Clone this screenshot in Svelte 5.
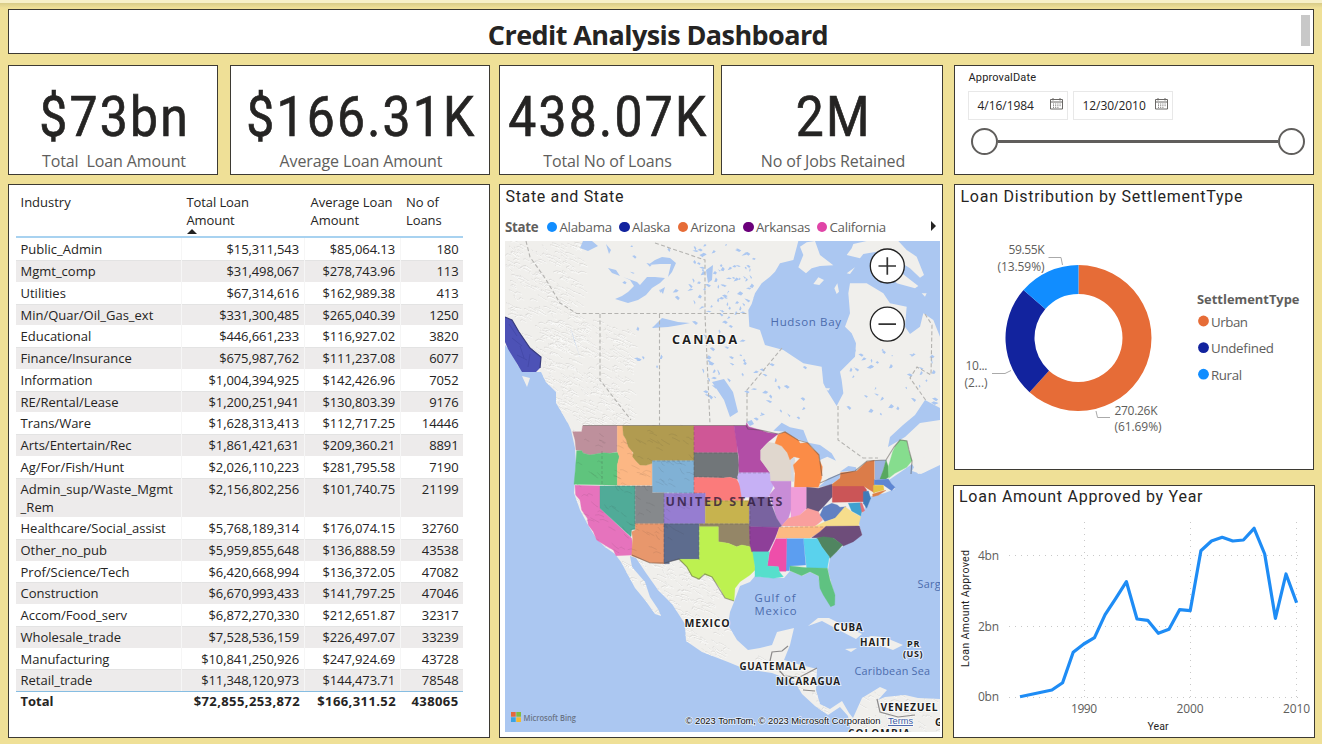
<script>
  const cards = {
    left: [
      { value: '$73bn', label: 'Total  Loan Amount', width: 210 },
      { value: '$166.31K', label: 'Average Loan Amount', width: 260 }
    ],
    middle: [
      { value: '438.07K', label: 'Total No of Loans', width: 215 },
      { value: '2M', label: 'No of Jobs Retained', width: 222 }
    ]
  };

  const rows = [
    ['Public_Admin', '$15,311,543', '$85,064.13', '180'],
    ['Mgmt_comp', '$31,498,067', '$278,743.96', '113'],
    ['Utilities', '$67,314,616', '$162,989.38', '413'],
    ['Min/Quar/Oil_Gas_ext', '$331,300,485', '$265,040.39', '1250'],
    ['Educational', '$446,661,233', '$116,927.02', '3820'],
    ['Finance/Insurance', '$675,987,762', '$111,237.08', '6077'],
    ['Information', '$1,004,394,925', '$142,426.96', '7052'],
    ['RE/Rental/Lease', '$1,200,251,941', '$130,803.39', '9176'],
    ['Trans/Ware', '$1,628,313,413', '$112,717.25', '14446'],
    ['Arts/Entertain/Rec', '$1,861,421,631', '$209,360.21', '8891'],
    ['Ag/For/Fish/Hunt', '$2,026,110,223', '$281,795.58', '7190'],
    ['Admin_sup/Waste_Mgmt\n_Rem', '$2,156,802,256', '$101,740.75', '21199'],
    ['Healthcare/Social_assist', '$5,768,189,314', '$176,074.15', '32760'],
    ['Other_no_pub', '$5,959,855,648', '$136,888.59', '43538'],
    ['Prof/Science/Tech', '$6,420,668,994', '$136,372.05', '47082'],
    ['Construction', '$6,670,993,433', '$141,797.25', '47046'],
    ['Accom/Food_serv', '$6,872,270,330', '$212,651.87', '32317'],
    ['Wholesale_trade', '$7,528,536,159', '$226,497.07', '33239'],
    ['Manufacturing', '$10,841,250,926', '$247,924.69', '43728'],
    ['Retail_trade', '$11,348,120,973', '$144,473.71', '78548']
  ];

  const stateLegend = [
    ['Alabama', '#118dff', 54], ['Alaska', '#12239e', 40], ['Arizona', '#e66c37', 47],
    ['Arkansas', '#6b007b', 55], ['California', '#e044a7', 58]
  ];

  const settlement = [
    ['Urban', '#e66c37', 0.6169], ['Undefined', '#12239e', 0.2472], ['Rural', '#118dff', 0.1359]
  ];

  function slice(from, to) {
    const cx = 1078.5, cy = 338, R = 73, r = 44;
    const p = (t, rad) => `${cx + rad * Math.sin(t * 2 * Math.PI)} ${cy - rad * Math.cos(t * 2 * Math.PI)}`;
    const big = to - from > 0.5 ? 1 : 0;
    return `M${p(from, R)}A${R} ${R} 0 ${big} 1 ${p(to, R)}L${p(to, r)}A${r} ${r} 0 ${big} 0 ${p(from, r)}Z`;
  }
  let acc = 0;
  const slices = settlement.map(([name, color, share]) => {
    const d = slice(acc, acc + share);
    acc += share;
    return { name, color, d };
  });

  // Vertical position of each year from 1984 to 2010.
  const series = [696.7, 694.5, 692.3, 690, 682.7, 652.3, 644, 637.7, 614.7, 598.3, 581.7, 619, 620.3,
    633.3, 629.3, 609.7, 610.7, 550.7, 541, 537.3, 541, 540, 528.3, 554, 618.3, 574, 602.7];
  const line = series.map((y, i) => `${(1020 + i * 10.64).toFixed(1)},${y}`).join(' ');

  // Western half of the country grid.
  const west = [
    ['WA', '#be909c', '38,65 65,65 68,47 172,47 172,125 150,130 130,128 90,135 70,130 65,122 48,120 45,90'],
    ['OR', '#5fc47d', '50,122 65,122 70,130 90,135 130,128 150,130 175,127 178,140 172,165 172,226 42,223 46,180'],
    ['ID', '#fcb784', '172,47 188,47 190,75 198,88 205,110 215,118 218,130 225,145 230,155 240,165 258,166 277,160 277,226 172,226 172,165 178,140 172,125'],
    ['MT', '#b19b50', '188,47 402,47 402,152 277,152 277,160 258,166 240,165 230,155 218,140 220,128 205,110 198,88 190,75'],
    ['WY', '#80b1d5', '277,152 402,152 402,250 277,247'],
    ['ND', '#cf5796', '402,47 522,47 530,90 533,128 402,128'],
    ['SD', '#717679', '402,128 533,128 537,165 533,208 510,202 490,204 402,202'],
    ['NE', '#fb7b7b', '402,202 490,204 510,202 530,208 540,225 552,272 436,272 436,250 402,250'],
    ['CA', '#e673bd', '45,226 120,228 120,295 215,385 218,410 218,435 168,437 160,420 145,412 110,390 100,365 85,345 82,325 65,300 60,270 47,255'],
    ['NV', '#50ab98', '120,228 226,228 226,358 215,360 213,380 120,295'],
    ['UT', '#86898c', '226,228 277,228 277,248 312,248 312,341 226,341'],
    ['CO', '#967dd1', '312,250 436,250 436,341 312,341'],
    ['AZ', '#e8976c', '226,341 312,341 312,461 270,458 215,437 218,385 215,365 226,360'],
    ['NM', '#5d6c8e', '312,341 418,341 418,448 357,448 328,455 328,461 312,461'],
    ['KS', '#c7b34e', '436,272 568,272 568,341 436,341'],
    ['OK', '#948667', '418,341 570,341 572,410 545,405 530,410 505,400 475,395 475,350 418,350'],
    ['TX', '#bdf150', '418,350 475,350 475,395 505,400 530,410 545,405 572,410 582,415 585,480 570,495 540,515 525,535 522,572 495,563 480,535 455,500 430,493 418,508 395,498 380,470 357,448 418,448']
  ];

  const east = [
    ['MN', '#b24da6', '-18,47 18,47 20,38 26,50 60,60 85,68 114,72 85,95 62,120 62,150 90,188 -3,188 -4,140'],
    ['IA', '#c6b0f5', '-3,188 90,188 105,215 95,240 85,262 5,262 0,230 -8,200'],
    ['WI', '#e0d7ce', '62,120 85,97 105,100 125,108 150,130 165,150 158,214 92,214 90,188 62,150'],
    ['MI', '#fb8c47', '105,100 114,74 135,65 155,78 175,90 180,100 203,98 216,115 236,132 238,150 247,170 245,205 235,232 163,232 165,190 160,165 180,145 162,140 150,150 142,128 125,108'],
    ['IL', '#c88dd7', '92,214 153,214 153,300 145,325 125,348 110,325 100,290 88,255 105,235'],
    ['IN', '#f09dd8', '153,232 200,232 200,295 180,315 153,325'],
    ['OH', '#66557c', '200,232 235,235 277,222 277,260 250,290 235,305 200,298'],
    ['MO', '#7963a0', '28,262 85,262 95,285 110,325 125,348 118,352 28,350 28,290'],
    ['AR', '#8e3f99', '28,350 118,352 105,385 88,420 82,428 35,425 30,405'],
    ['KY', '#f99f9d', '125,348 145,325 180,315 203,295 235,305 248,330 225,349'],
    ['TN', '#fcba82', '118,352 258,348 240,365 210,384 108,384'],
    ['WV', '#6180c2', '240,315 250,292 275,280 292,285 300,292 318,290 300,315 285,325 255,335'],
    ['VA', '#f6dd8c', '225,349 255,335 285,325 315,290 335,305 362,320 355,348'],
    ['NC', '#6e4d7a', '258,349 358,348 366,375 340,395 310,408 280,384 215,383 240,365'],
    ['SC', '#508560', '230,385 250,380 280,384 308,405 290,425 270,445 245,410'],
    ['GA', '#5ad2ed', '190,386 232,386 245,410 268,440 262,475 200,475'],
    ['AL', '#5c9ef0', '140,386 190,386 197,465 150,468 148,482 138,482'],
    ['MS', '#ee4eaa', '108,386 140,386 138,484 118,484 115,470 82,468 88,430'],
    ['LA', '#56dfcc', '38,425 88,425 82,468 115,470 118,485 130,500 100,505 60,500 45,500 45,470'],
    ['FL', '#5fc281', '150,468 200,473 262,475 270,510 285,555 284,585 272,590 250,555 240,535 236,498 210,485 185,497 150,482'],
    ['PA', '#cb5557', '277,228 370,226 380,240 372,275 277,277'],
    ['NY', '#db7c49', '277,222 300,205 302,188 350,183 380,155 403,151 403,225 403,248 370,228 277,228'],
    ['NJ', '#3f7bb9', '370,245 385,243 392,265 380,295 370,280'],
    ['MD', '#3fa1d0', '325,280 362,278 367,300 362,318 335,303'],
    ['DE', '#e27077', '360,280 366,278 374,302 366,307'],
    ['VT', '#9cb3df', '405,152 438,150 430,180 422,207 405,207'],
    ['NH', '#58a85f', '438,150 445,170 447,200 438,207 420,207 430,180'],
    ['MA', '#5e86d2', '403,209 445,207 455,222 465,232 455,242 430,225 403,224'],
    ['CT', '#e5c345', '400,226 430,226 432,240 400,248'],
    ['LI', '#dd8147', '398,252 425,244 438,241 415,256 398,260'],
    ['ME', '#86dd8e', '445,170 458,125 466,108 480,90 500,92 505,120 516,152 500,172 465,190 446,205']
  ];

  // Seeded generator keeps terrain strokes and lakes stable between renders.
  let seed = 7;
  const rnd = () => ((seed = (seed * 16807) % 2147483647) / 2147483647);
  function ridges(x0, y0, w, h, n) {
    let d = '';
    for (let i = 0; i < n; i++) {
      const x = x0 + rnd() * w, y = y0 + rnd() * h;
      const a = 2 + rnd() * 5, b = (rnd() - 0.2) * 6;
      d += `M${x.toFixed(1)} ${y.toFixed(1)}q${(a / 2).toFixed(1)} ${(b - 2).toFixed(1)} ${a.toFixed(1)} ${b.toFixed(1)}l2 1`;
    }
    return d;
  }
  const ridgePath =
    ridges(505, 241, 75, 110, 260) + ridges(540, 320, 90, 105, 330) + ridges(570, 425, 120, 130, 130) +
    ridges(615, 555, 110, 100, 260) + ridges(740, 655, 90, 70, 100) + ridges(855, 690, 85, 45, 60) + ridges(890, 241, 50, 70, 60);
  function lakes(x0, y0, w, h, n) {
    let d = '';
    for (let i = 0; i < n; i++) {
      const x = x0 + rnd() * w, y = y0 + rnd() * h;
      const a = 1.5 + rnd() * 5, b = (rnd() - 0.5) * 5, c = 0.7 + rnd() * 1.6;
      d += `M${x.toFixed(1)} ${y.toFixed(1)}l${(a / 2).toFixed(1)} ${(b - c).toFixed(1)}l${(a / 2).toFixed(1)} ${c.toFixed(1)}l${(-a / 3).toFixed(1)} ${c.toFixed(1)}z`;
    }
    return d;
  }
  const lakePath =
    lakes(690, 243, 70, 80, 75) + lakes(700, 320, 45, 80, 32) + lakes(745, 360, 60, 60, 20) +
    lakes(845, 350, 90, 65, 42) + lakes(630, 320, 60, 50, 8) + lakes(620, 243, 75, 60, 12);

  // x, baseline, width, size, text, kind
  const places = [
    [672, 344, 65, 12.5, 'CANADA', 'land'],
    [665.5, 506, 117, 12.5, 'UNITED STATES', 'us'],
    [684.5, 626.5, 45, 10.5, 'MEXICO', 'land'],
    [833.5, 631, 29, 9.8, 'CUBA', 'land'],
    [860, 645.5, 30, 9.8, 'HAITI', 'land'],
    [907, 647, 12.5, 9, 'PR', 'land'],
    [903, 656.5, 19.5, 9, '(US)', 'land'],
    [739.5, 670, 66, 9.8, 'GUATEMALA', 'land'],
    [776, 684.5, 64, 9.8, 'NICARAGUA', 'land'],
    [880.5, 711, 57, 10.3, 'VENEZUEL', 'land'],
    [935, 726, 8, 10, 'G', 'land'],
    [848, 737, 62, 10, 'COLOMBIA', 'land'],
    [770.5, 325.5, 70.5, 11.5, 'Hudson Bay', 'sea'],
    [754.5, 602, 41, 11.3, 'Gulf of', 'sea'],
    [754.5, 615, 42, 11.3, 'Mexico', 'sea'],
    [917.5, 588, 23, 10.8, 'Sarg', 'sea'],
    [854.5, 675, 75.5, 10.8, 'Caribbean Sea', 'sea']
  ];
</script>

{#snippet card(c)}
  <section class="panel card" style="width:{c.width}px">
    <div class="value">{c.value}</div>
    <div class="caption">{c.label}</div>
  </section>
{/snippet}

{#snippet calendar()}
  <svg class="cal" width="13" height="12" viewBox="0 0 13 12">
    <path d="M.5 1.500h12v9.500H.5zM.5 4h12M3 0v2.500M10 0v2.500" fill="none" stroke="#6a6866" />
    <path d="M3 6h1M5.200 6h1M7.400 6h1M9.600 6h1M3 7.700h1M5.200 7.700h1M7.400 7.700h1M9.600 7.700h1M3 9.400h1M5.200 9.400h1M7.400 9.400h1" stroke="#6a6866" stroke-width=".9" />
  </svg>
{/snippet}

<div class="page">
  <header class="panel head">
    <h1>Credit Analysis Dashboard</h1>
    <span class="thumb"></span>
  </header>

  <main>
    <div class="col left">
      <div class="cards">
        {#each cards.left as c}{@render card(c)}{/each}
      </div>
      <section class="panel tablebox">
        <div class="row thead">
          <div>Industry</div>
          <div>Total Loan<br />Amount<i class="sort"></i></div>
          <div>Average Loan<br />Amount</div>
          <div>No of<br />Loans</div>
        </div>
        {#each rows as r, i}
          <div class="row" class:odd={i % 2} class:tall={r[0].includes('\n')}>
            {#each r as cell}<div>{cell}</div>{/each}
          </div>
        {/each}
        <div class="row total"><div>Total</div><div>$72,855,253,872</div><div>$166,311.52</div><div>438065</div></div>
      </section>
    </div>

    <div class="col middle">
      <div class="cards">
        {#each cards.middle as c}{@render card(c)}{/each}
      </div>
      <section class="panel mapbox">
        <h2>State and State</h2>
        <div class="legend">
          <b>State</b>
          {#each stateLegend as [name, color, w]}
            <span class="key"><i style="background:{color}"></i><span style="width:{w}px">{name}</span></span>
          {/each}
          <i class="next"></i>
        </div>
        <svg class="map" width="435" height="491" viewBox="505 241 435 491">
          <defs>
            <path id="land" d="M505 241H940V408L925 400 915 415 903 425 890 437 888 447 905 437 920 423 940 420V462L925 472 918 474 912 464 905 469 889 480 895 489 885 493 868 497 864 510 858 520 862 535 843 546 830 558 828 570 831 582 835 597 832 606 827 600 821 588 818 576 810 572 802 576 790 571 784 578 773 578 755 576 750 582 740 586 734 602 730 612 728 625 737 640 748 650 760 648 772 645 777 632 794 628 790 645 784 660 801 665 817 669 816 690 820 704 830 709 842 701 849 713 853 718 862 698 880 687 887 690 878 700 885 697 905 695 918 698 940 699V732H851L848 716 840 707 828 715 815 706 802 694 795 682 772 673 745 669 728 662 702 652 686 641 685 624 672 604 658 590 646 573 636 558 630 556 632 567 645 582 650 597 658 609 661 616 655 614 645 600 635 588 628 575 621 562 615 554 605 547 596 538 588 525 580 510 574 493 576 465 575 448 571 430 567 421 556 403 556 392 546 382 541 372 528 372 518 366 512 353 505 345Z" />
            <clipPath id="onland"><use href="#land" /></clipPath>
          </defs>
          <rect x="505" y="241" width="435" height="491" fill="#abc7f1" />
          <use href="#land" fill="#f0efec" />
          <g clip-path="url(#onland)" fill="none">
            <path d={ridgePath} stroke="#d8d7d4" stroke-width=".8" />
            <path d={ridgePath} stroke="#fbfbfa" stroke-width=".8" transform="translate(.8 1)" />
          </g>
          <path d={lakePath} fill="#abc7f1" />
          <g fill="#abc7f1">
            <path d="M583 241L592 241 598 246 588 251 580 248ZM606 244L611 250 609 254ZM608 268L616 270 620 276 612 273ZM615 299L622 296 628 292 634 286 630 280 623 277 637 282 640 285 647 277 655 277 665 278 660 283 652 288 646 295 638 300 628 303ZM648 265L655 260 662 257 670 258 676 263 672 272 668 277 671 264 660 264ZM652 328L657 323 662 318 678 322 690 323 680 325 668 327ZM660 290L665 287 663 294ZM706 270L713 265 712 280 708 283ZM712 382L724 379 733 392 738 412 730 417 724 400ZM570 326L574 340 581 360 576 345Z" />
            <path transform="translate(720 180) scale(.33333)" d="M235 183L220 240 180 250 165 275 150 290 125 310 105 340 95 372 85 390 88 440 120 450 135 495 190 510 250 550 305 560 310 610 320 630 350 678 370 640 365 600 360 575 405 530 408 490 395 460 375 440 390 400 385 340 390 310 440 310 490 340 510 370 560 380 555 440 570 462 600 440 610 400 640 420 660 470 660 183Z" />
            <path transform="translate(740 410) scale(.33333)" d="M100 62L125 38 150 52 190 60 205 98 175 88 155 78 135 65ZM205 98L240 105 275 130 288 152 262 140 240 150 236 132ZM235 232L265 205 302 190 298 206 270 225ZM300 185L325 168 348 172 350 182ZM20 35L35 30 42 42 30 48Z" />
          </g>
          <g fill="#f0efec">
            <path transform="translate(720 180) scale(.33333)" d="M240 200L260 187 285 183 300 225 340 256 300 258 275 265 258 280 235 262 250 225ZM280 312L295 292 312 300 298 315ZM343 325L352 310 357 335 350 342ZM380 225L395 205 400 192 440 183 535 183 560 210 590 230 612 285 600 293 570 265 530 240 500 220 470 215 430 222 420 235ZM500 270L540 275 595 318 585 325 530 310ZM605 340L620 340 615 350ZM310 625L330 625 325 632ZM380 280L405 262 390 282Z" />
            <path d="M561 411L573 417 582 425 577 429 567 422ZM522 376L530 378 527 387ZM545 372L548 378 543 377ZM808 626L818 618 829 618 841 624 862 634 856 639 835 628 822 621ZM861 640L871 636 884 637 903 645 893 650 882 646 867 647ZM845 649L857 648 851 652ZM911 645L920 645 918 648ZM912 471L917 461 940 450 940 465 921 474Z" />
          </g>
          <g fill="none" stroke="#b4b3b0" stroke-width="1.1" stroke-dasharray="4 2.4">
            <path d="M576 313.5H748M600 314V380L631 420M659.5 314V425M526 241L530 257 545 278 560 303 576 313M655 243L705 260V315L710 424M782 348L747 390V424M838 406V440L863 458 878 458M925 314L932 325 931 375 917 367 910 378 927 402" />
          </g>
          <path d="M770 661L772 652 782 651 788 646M779 670L784 676 800 677 817 668M803 690L815 691M877 699L880 712 898 717 915 715" fill="none" stroke="#8d8b8b" stroke-width="1.2" />

          <path d="M505 317L512 320 519 332 530 348 541 357 540 368 536 372 522 372 516 362 508 349 505 342Z" fill="#4d52b6" />
          <path d="M505 317L512 320 519 332 530 348 541 357 540 368" fill="none" stroke="#383c7e" stroke-width="1.2" />
          <path d="M509 324l8 12M512 338l10 8M520 346l4 12M530 354l-2 13M517 355l10 5" stroke="#454aaa" fill="none" />
          <g transform="translate(560 410) scale(.33333)">
            {#each west as [id, fill, pts] (id)}<polygon points={pts} {fill} stroke={fill} stroke-width="1" />{/each}
          </g>
          <g transform="translate(740 410) scale(.33333)">
            {#each east as [id, fill, pts] (id)}<polygon points={pts} {fill} stroke={fill} stroke-width="1" />{/each}
            <path d="M152 148L166 140 158 165 163 215 155 214Z" fill="#d3d9e2" />
          </g>
          <path d="M583 425.5H746L748 429 760 430 778 434M820 483L840 474 855 471 867 461 886 460 894 447 900 440 907 441 909 450 912 461 911 474M632 555L650 563 665 563 679 559 687 567 692 576 699 579 705 574 712 577 720 590 725 598 734 601M778 434L785 432 798 440 808 443 819 455 822 476" fill="none" stroke="#4c4540" stroke-opacity=".45" stroke-width="1.2" />
          <g clip-path="url(#onland)" opacity=".1"><path d={ridges(575, 430, 115, 125, 110)} stroke="#333" stroke-width=".9" fill="none" /></g>
          <path d="M602 451V486M617 486H652M635 486V524M652 461H694M664 494V563M664 493H705M694 427V494M694 453H738M694 477H723M705 501H750M635 524H750M699 527V560M738 473H770M780 527H825M750 501V547" stroke="#3a3340" stroke-opacity=".25" fill="none" stroke-width=".8" stroke-dasharray="3 2" />

          {#each places as [x, y, w, size, text, kind]}
            <text {x} {y} font-size={size} textLength={w} class={kind}>{text}</text>
          {/each}

          <g stroke="#222" fill="#fff">
            <circle cx="887.3" cy="266" r="17" stroke-width="1.3" />
            <circle cx="887.3" cy="324.2" r="17" stroke-width="1.3" />
            <path d="M878.5 266H896M887.3 257.3V274.8M878.5 324.2H896" stroke="#333" stroke-width="1.7" />
          </g>

          <rect x="511" y="712" width="4.7" height="4.7" fill="#e5673c" />
          <rect x="516.3" y="712" width="4.7" height="4.7" fill="#83bb3f" />
          <rect x="511" y="717.3" width="4.7" height="4.7" fill="#3aa3e3" />
          <rect x="516.3" y="717.3" width="4.7" height="4.7" fill="#f5ba2e" />
          <text x="523.5" y="720.5" font-size="9" textLength="52.5" lengthAdjust="spacingAndGlyphs" class="bing">Microsoft Bing</text>
          <text x="685.5" y="724" font-size="9" textLength="195" lengthAdjust="spacingAndGlyphs" class="copy">© 2023 TomTom, © 2023 Microsoft Corporation</text>
          <text x="888" y="724" font-size="9" textLength="25" lengthAdjust="spacingAndGlyphs" class="terms">Terms</text>
        </svg>
      </section>
    </div>

    <div class="col right">
      <section class="panel datebox">
        <div class="dlabel">ApprovalDate</div>
        <div class="inputs">
          <div class="date"><span>4/16/1984</span>{@render calendar()}</div>
          <div class="date"><span>12/30/2010</span>{@render calendar()}</div>
        </div>
        <div class="slider"><i></i><b></b><i></i></div>
      </section>

      <section class="panel donutbox">
        <svg width="358" height="284" viewBox="955 185 358 284">
          <text x="960.500" y="202" font-size="16" textLength="282" class="din title">Loan Distribution by SettlementType</text>
          {#each slices as s}<path d={s.d} fill={s.color} />{/each}
          <path d="M1048.500 257.500H1061L1062.500 265M992 373.500H1005L1011 370.500M1096 411L1097.500 417.500H1110" fill="none" stroke="#aaa" />
          <g class="ui" font-size="12">
            <text x="1008.500" y="254" textLength="36">59.55K</text>
            <text x="997.500" y="271" textLength="47">(13.59%)</text>
            <text x="965.500" y="370" textLength="22">10...</text>
            <text x="964.500" y="387" textLength="23">(2...)</text>
            <text x="1114.500" y="415" textLength="43">270.26K</text>
            <text x="1114.500" y="431" textLength="47">(61.69%)</text>
            <text x="1197" y="304" font-size="13" font-weight="700" textLength="102.500" lengthAdjust="spacingAndGlyphs">SettlementType</text>
          </g>
          <circle cx="1203.500" cy="321" r="5.400" fill="#e66c37" />
          <circle cx="1203.500" cy="347.600" r="5.400" fill="#12239e" />
          <circle cx="1203.500" cy="374.200" r="5.400" fill="#118dff" />
          <g class="ui" font-size="13.300">
            <text x="1211" y="327" textLength="37">Urban</text>
            <text x="1211" y="353" textLength="63">Undefined</text>
            <text x="1211" y="380" textLength="31">Rural</text>
          </g>
        </svg>
      </section>

      <section class="panel linebox">
        <svg width="360" height="251" viewBox="954 486 360 251">
          <text x="959" y="502" font-size="16" textLength="243.500" class="din title">Loan Amount Approved by Year</text>
          <path d="M1009 555.500H1302M1009 626.500H1302M1009 697.500H1302M1084.500 522V697M1190.500 522V697M1296.500 522V697" fill="none" stroke="#c8c8c8" stroke-dasharray="1 5" />
          <polyline points={line} fill="none" stroke="#1e8cf5" stroke-width="3.200" stroke-linejoin="round" />
          <g class="ui" font-size="12">
            <text x="978" y="560" textLength="21">4bn</text>
            <text x="978" y="631" textLength="21">2bn</text>
            <text x="978" y="701" textLength="21">0bn</text>
            <text x="1071" y="713" textLength="26">1990</text>
            <text x="1176.500" y="713" textLength="27">2000</text>
            <text x="1283" y="713" textLength="27">2010</text>
          </g>
          <text x="1147.500" y="730" font-size="10.500" textLength="21" class="din">Year</text>
          <text transform="translate(968.500 667) rotate(-90)" font-size="10.500" textLength="117" class="din">Loan Amount Approved</text>
        </svg>
      </section>
    </div>
  </main>
</div>

<style>
  :global(body) { background: #efe097; }
  * { box-sizing: border-box; }
  .page {
    width: 1322px; height: 744px; padding: 9px 8px 0; overflow: hidden;
    background: linear-gradient(#f7f0c8 0 3px, #d8cb88 3px, #efe097 8px);
    font-family: "Open Sans", "Noto Sans", sans-serif; color: #252423;
  }
  .panel { background: #fff; border: 1px solid #3d3a33; }
  .head { height: 45px; width: 1306px; display: flex; justify-content: center; position: relative; }
  h1 { margin: 5px 6px 0 0; font-size: 27px; line-height: 40px; font-weight: 700; letter-spacing: -.58px; white-space: nowrap; }
  .thumb { position: absolute; right: 3px; top: 5px; width: 9px; height: 31px; background: #c8c8c8; }
  main { display: flex; margin-top: 11px; }
  .col { display: flex; flex-direction: column; flex-shrink: 0; }
  .left { width: 482px; margin-right: 9px; }
  .middle { width: 444px; margin-right: 11px; }
  .right { width: 362px; }
  .cards { display: flex; justify-content: space-between; height: 110px; margin-bottom: 9px; }
  .card { text-align: center; display: flex; flex-direction: column; align-items: center; }
  .value { font: 400 56px/60px Roboto, sans-serif; letter-spacing: 2.500px; margin: 21px 0 0 3px; transform: scaleX(.89); white-space: nowrap; -webkit-text-stroke: .7px #252423; }
  .caption { font-size: 16px; line-height: 24px; letter-spacing: -.12px; color: #605e5c; white-space: pre; margin-top: 2px; padding-left: 2px; }

  .tablebox { height: 554px; padding: 0 0 0 6.500px; font-size: 13px; letter-spacing: -.1px; }
  .row { display: grid; grid-template-columns: 166px 123.500px 96px 62px; width: 447.500px; height: 21.780px; line-height: 18px; white-space: pre; }
  .row > div { padding: 2px 5px 0 5px; border-right: 1px solid #f6f6f6; }
  .row > div:first-child { letter-spacing: 0; }
  .row > div:last-child { border-right: 0; padding-right: 4.500px; }
  .row:not(.thead) > div:not(:first-child) { text-align: right; }
  .odd { background: #edebeb; box-shadow: inset 0 1px #e3e3e3; }
  .tall { height: 39.300px; }
  .tall > div:first-child { letter-spacing: .1px; }
  .thead { height: 53.300px; border-bottom: 2px solid #a8d2f0; }
  .thead > div { position: relative; padding-top: 8px; border: 0; }
  .thead > div:nth-child(3) { letter-spacing: 0; padding-left: 5.500px; }
  .sort { position: absolute; left: 5px; top: 44px; border: 5px solid transparent; border-top: 0; border-bottom: 5px solid #222; }
  .row.total { font-weight: 700; border-top: 1px solid #86bde2; letter-spacing: .4px; }
  .total > div { border: 0; padding-top: 0; }

  .mapbox { height: 554px; padding-left: 5px; }
  h2 { margin: 2px 0 0 .5px; font: 400 16px/20px Roboto, sans-serif; letter-spacing: .65px; }
  .legend { display: flex; align-items: center; height: 34px; padding-top: 6px; font-size: 13.300px; color: #605e5c; position: relative; letter-spacing: -.3px; }
  .legend b { width: 41.500px; letter-spacing: -.3px; }
  .key { display: flex; align-items: center; gap: 2.500px; margin-right: 5.500px; }
  .key i { width: 10.500px; height: 10.500px; border-radius: 50%; }
  .key > span { white-space: nowrap; }
  .next { position: absolute; left: 426px; top: 14px; border: 5.500px solid transparent; border-left-color: #252423; border-right: 0; }
  .map { display: block; }
  text { white-space: pre; }
  .land { font-weight: 700; fill: #1d1d1d; stroke: #fff; stroke-width: 2px; stroke-opacity: .7; paint-order: stroke; }
  .us { font-weight: 700; fill: #2d1838; fill-opacity: .78; }
  .sea { fill: #4c6cad; font-weight: 500; }
  .bing { fill: #6a7486; font-weight: 600; }
  .copy, .terms { font-family: "Liberation Sans", sans-serif; fill: #111; stroke: #fff; stroke-width: 1.500px; stroke-opacity: .7; paint-order: stroke; }
  .terms { fill: #3a5aa8; text-decoration: underline; }

  .datebox { width: 360px; height: 110px; margin-bottom: 9px; padding-left: 13px; }
  .dlabel { font: 400 11px/14px Roboto, sans-serif; letter-spacing: .15px; margin: 5px 0 0 .5px; }
  .inputs { display: flex; gap: 5px; margin-top: 6px; }
  .date { width: 100px; height: 29px; border: 1px solid #e8e8e8; display: flex; align-items: center; justify-content: space-between; padding: 0 4px 0 8.500px; font-size: 12px; letter-spacing: -.05px; }
  .cal { margin-top: -3px; }
  .slider { display: flex; align-items: center; width: 334px; margin: 8px 0 0 2.500px; }
  .slider i { width: 27px; height: 27px; border: 2px solid #605e5c; border-radius: 50%; }
  .slider b { flex: 1; height: 3px; background: #605e5c; }
  .donutbox { width: 360px; height: 286px; margin-bottom: 15px; }
  .linebox { width: 362px; height: 253px; margin-left: -1px; }
  .panel > svg { display: block; }
  .din { font-family: Roboto, sans-serif; fill: #252423; }
  .ui { fill: #605e5c; }
</style>
